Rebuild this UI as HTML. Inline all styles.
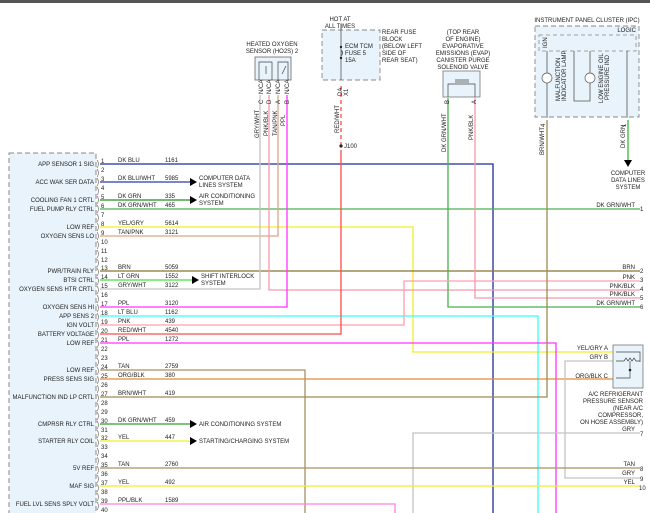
<!DOCTYPE html>
<html><head><meta charset="utf-8"><style>
html,body{margin:0;padding:0;background:#fff;}
svg{display:block;font-family:"Liberation Sans",Arial,sans-serif;}
text{font-size:6px;fill:#222;}
</style></head><body>
<svg width="650" height="513" viewBox="0 0 650 513" xmlns="http://www.w3.org/2000/svg">
<rect x="0" y="0" width="650" height="3" fill="#555"/>
<!-- module -->
<rect x="9" y="153" width="87" height="370" fill="#e8f3fb" stroke="#888" stroke-dasharray="5,3" stroke-width="1"/>
<g fill="none" stroke="#777" stroke-width="0.7">
<path id="c" d="M96,0"/>
</g>
<g stroke="#777" fill="none" stroke-width="0.7">
<path d="M97,160 q3,4 0,8 M97,169 q3,4 0,8 M97,178 q3,4 0,8 M97,187 q3,4 0,8 M97,196 q3,4 0,8 M97,205 q3,4 0,8 M97,214 q3,4 0,8 M97,223 q3,4 0,8 M97,232 q3,4 0,8 M97,241 q3,4 0,8 M97,250 q3,4 0,8 M97,259 q3,4 0,8 M97,268 q3,4 0,8 M97,277 q3,4 0,8 M97,286 q3,4 0,8 M97,295 q3,4 0,8 M97,304 q3,4 0,8 M97,313 q3,4 0,8 M97,322 q3,4 0,8 M97,331 q3,4 0,8 M97,340 q3,4 0,8 M97,349 q3,4 0,8 M97,358 q3,4 0,8 M97,367 q3,4 0,8 M97,376 q3,4 0,8 M97,385 q3,4 0,8 M97,394 q3,4 0,8 M97,403 q3,4 0,8 M97,412 q3,4 0,8 M97,421 q3,4 0,8 M97,430 q3,4 0,8 M97,439 q3,4 0,8 M97,448 q3,4 0,8 M97,457 q3,4 0,8 M97,466 q3,4 0,8 M97,475 q3,4 0,8 M97,484 q3,4 0,8 M97,493 q3,4 0,8 M97,502 q3,4 0,8"/>
</g>
<!-- left labels -->
<g text-anchor="end">
<text x="94" y="166">APP SENSOR 1 SIG</text>
<text x="94" y="184">ACC WAK SER DATA</text>
<text x="94" y="202">COOLING FAN 1 CRTL</text>
<text x="94" y="211">FUEL PUMP RLY CTRL</text>
<text x="94" y="229">LOW REF</text>
<text x="94" y="238">OXYGEN SENS LO</text>
<text x="94" y="273">PWR/TRAIN RLY</text>
<text x="94" y="282">BTSI CTRL</text>
<text x="94" y="291">OXYGEN SENS HTR CRTL</text>
<text x="94" y="309">OXYGEN SENS HI</text>
<text x="94" y="318">APP SENS 2</text>
<text x="94" y="327">IGN VOLT</text>
<text x="94" y="336">BATTERY VOLTAGE</text>
<text x="94" y="345">LOW REF</text>
<text x="94" y="372">LOW REF</text>
<text x="94" y="381">PRESS SENS SIG</text>
<text x="94" y="399">MALFUNCTION IND LP CRTL</text>
<text x="94" y="426">CMPRSR RLY CTRL</text>
<text x="94" y="443">STARTER RLY COIL</text>
<text x="94" y="470">5V REF</text>
<text x="94" y="488">MAF SIG</text>
<text x="94" y="506">FUEL LVL SENS SPLY VOLT</text>
</g>
<!-- pin numbers -->
<g font-size="5.5">
<text x="101" y="163">1</text><text x="101" y="172">2</text><text x="101" y="181">3</text><text x="101" y="190">4</text><text x="101" y="199">5</text><text x="101" y="208">6</text><text x="101" y="217">7</text><text x="101" y="226">8</text><text x="101" y="235">9</text><text x="101" y="244">10</text><text x="101" y="253">11</text><text x="101" y="262">12</text><text x="101" y="270">13</text><text x="101" y="279">14</text><text x="101" y="288">15</text><text x="101" y="297">16</text><text x="101" y="306">17</text><text x="101" y="315">18</text><text x="101" y="324">19</text><text x="101" y="333">20</text><text x="101" y="342">21</text><text x="101" y="351">22</text><text x="101" y="360">23</text><text x="101" y="369">24</text><text x="101" y="378">25</text><text x="101" y="387">26</text><text x="101" y="396">27</text><text x="101" y="405">28</text><text x="101" y="414">29</text><text x="101" y="423">30</text><text x="101" y="432">31</text><text x="101" y="440">32</text><text x="101" y="449">33</text><text x="101" y="458">34</text><text x="101" y="467">35</text><text x="101" y="476">36</text><text x="101" y="485">37</text><text x="101" y="494">38</text><text x="101" y="503">39</text><text x="101" y="512">40</text>
</g>
<!-- wires -->
<g fill="none" stroke-width="1.3">
<path d="M100,164H493V513" stroke="#1c2f96"/>
<path d="M100,182H190" stroke="#2a3fa0"/>
<path d="M100,200H190" stroke="#1f8f1f"/>
<path d="M100,209H640" stroke="#4caf50"/>
<path d="M100,227H413V352H622" stroke="#f2ee2a"/>
<path d="M100,236H278V95" stroke="#dfa585"/>
<path d="M100,271H640" stroke="#8b7332"/>
<path d="M100,280H192" stroke="#40e040"/>
<path d="M100,289H260V95" stroke="#c4c4c4"/>
<path d="M269,95V290H640" stroke="#f29aaa"/>
<path d="M475,98V298H640" stroke="#f29aaa"/>
<path d="M448,98V307H640" stroke="#4caf50"/>
<path d="M100,307H287V95" stroke="#ff33ff"/>
<path d="M100,316H538V513" stroke="#33ffff"/>
<path d="M100,325H404V281H640" stroke="#ff9fb0"/>
<path d="M100,334H341V150" stroke="#ff4a4a"/>
<path d="M341,86V146" stroke="#ff4a4a" stroke-dasharray="4,3"/>
<path d="M341,24V80" stroke="#555" stroke-width="0.8"/>
<path d="M100,343H556V513" stroke="#ff33ff"/>
<path d="M100,370H305V513" stroke="#a89060"/>
<path d="M100,379H622" stroke="#e08a3c"/>
<path d="M100,397H547V120" stroke="#a08a50"/>
<path d="M100,424H190" stroke="#2f9f2f"/>
<path d="M100,441H190" stroke="#f2ee2a"/>
<path d="M413,513V433H640" stroke="#c4c4c4"/>
<path d="M622,361H565V478H640" stroke="#c4c4c4"/>
<path d="M100,468H640" stroke="#a89060"/>
<path d="M100,486H640" stroke="#f2ee2a"/>
<path d="M100,504H395V513" stroke="#ff80e0"/>
<path d="M628,120V162" stroke="#33bb33"/>
</g>
<!-- arrows -->
<g fill="#000">
<path d="M190,178l7,4l-7,4z"/><path d="M190,196l7,4l-7,4z"/><path d="M192,276l7,4l-7,4z"/>
<path d="M190,420l7,4l-7,4z"/><path d="M190,437l7,4l-7,4z"/><path d="M624,160l4,7l4,-7z"/>
</g>
<text x="199" y="180">COMPUTER DATA</text><text x="199" y="187">LINES SYSTEM</text>
<text x="199" y="198">AIR CONDITIONING</text><text x="199" y="205">SYSTEM</text>
<text x="201" y="278">SHIFT INTERLOCK</text><text x="201" y="285">SYSTEM</text>
<text x="199" y="426">AIR CONDITIONING SYSTEM</text>
<text x="199" y="443">STARTING/CHARGING SYSTEM</text>
<!-- wire labels -->
<g>
<text x="118" y="162">DK BLU</text><text x="165" y="162">1161</text>
<text x="118" y="180">DK BLU/WHT</text><text x="165" y="180">5985</text>
<text x="118" y="198">DK GRN</text><text x="165" y="198">335</text>
<text x="118" y="207">DK GRN/WHT</text><text x="165" y="207">465</text>
<text x="118" y="225">YEL/GRY</text><text x="165" y="225">5614</text>
<text x="118" y="234">TAN/PNK</text><text x="165" y="234">3121</text>
<text x="118" y="269">BRN</text><text x="165" y="269">5059</text>
<text x="118" y="278">LT GRN</text><text x="165" y="278">1552</text>
<text x="118" y="287">GRY/WHT</text><text x="165" y="287">3122</text>
<text x="118" y="305">PPL</text><text x="165" y="305">3120</text>
<text x="118" y="314">LT BLU</text><text x="165" y="314">1162</text>
<text x="118" y="323">PNK</text><text x="165" y="323">439</text>
<text x="118" y="332">RED/WHT</text><text x="165" y="332">4540</text>
<text x="118" y="341">PPL</text><text x="165" y="341">1272</text>
<text x="118" y="368">TAN</text><text x="165" y="368">2759</text>
<text x="118" y="377">ORG/BLK</text><text x="165" y="377">380</text>
<text x="118" y="395">BRN/WHT</text><text x="165" y="395">419</text>
<text x="118" y="422">DK GRN/WHT</text><text x="165" y="422">459</text>
<text x="118" y="439">YEL</text><text x="165" y="439">447</text>
<text x="118" y="466">TAN</text><text x="165" y="466">2760</text>
<text x="118" y="484">YEL</text><text x="165" y="484">492</text>
<text x="118" y="502">PPL/BLK</text><text x="165" y="502">1589</text>
</g>
<!-- right labels -->
<g text-anchor="end">
<text x="635" y="207">DK GRN/WHT</text>
<text x="635" y="269">BRN</text><text x="635" y="279">PNK</text><text x="635" y="288">PNK/BLK</text><text x="635" y="296">PNK/BLK</text><text x="635" y="305">DK GRN/WHT</text>
<text x="635" y="431">GRY</text><text x="635" y="466">TAN</text><text x="635" y="475">GRY</text><text x="635" y="484">YEL</text>
<text x="608" y="350">YEL/GRY A</text><text x="608" y="359">GRY B</text><text x="608" y="378">ORG/BLK C</text>
</g>
<g font-size="5.5"><text x="640" y="211">1</text><text x="640" y="273">2</text><text x="640" y="282">3</text><text x="640" y="291">4</text><text x="640" y="300">5</text><text x="640" y="309">6</text><text x="640" y="436">7</text><text x="640" y="471">8</text><text x="640" y="481">9</text><text x="639" y="490">10</text></g>
<!-- A/C sensor -->
<rect x="613" y="345" width="30" height="43" fill="#e8f3fb" stroke="#777" stroke-width="0.8"/>
<path d="M616,352H640V362M616,361h8l2,-3 2,3 2,-3 2,3 2,-3 2,3h4M630,361V378H616" fill="none" stroke="#444" stroke-width="0.7"/>
<circle cx="630" cy="370" r="1.3" fill="#222"/>
<g text-anchor="end"><text x="643" y="396">A/C REFRIGERANT</text><text x="643" y="403">PRESSURE SENSOR</text><text x="643" y="410">(NEAR A/C</text><text x="643" y="417">COMPRESSOR,</text><text x="643" y="424">ON HOSE ASSEMBLY)</text></g>
<!-- HO2S -->
<text x="272" y="46" text-anchor="middle">HEATED OXYGEN</text>
<text x="272" y="53" text-anchor="middle">SENSOR (HO2S) 2</text>
<rect x="255" y="57" width="36" height="23" fill="#e8f3fb" stroke="#666" stroke-width="0.8"/>
<path d="M259,80V62h13v18M278,80V62h10v18M266,66v8M282,74l4,-8" fill="none" stroke="#444" stroke-width="0.7"/>
<g font-size="5" transform="rotate(-90)">
<text x="-94" y="263">N/CA</text><text x="-94" y="271">N/CA</text><text x="-94" y="280">N/CA</text><text x="-94" y="289">N/CA</text>
<text x="-104" y="263">C</text><text x="-104" y="271">D</text><text x="-104" y="280">A</text><text x="-104" y="289">B</text>
<text x="-138" y="259">GRY/WHT</text><text x="-136" y="268">PNK/BLK</text><text x="-136" y="277">TAN/PNK</text><text x="-126" y="285">PPL</text>
</g>
<!-- fuse -->
<text x="340" y="21" text-anchor="middle">HOT AT</text><text x="340" y="28" text-anchor="middle">ALL TIMES</text>
<rect x="322" y="30" width="58" height="50" fill="#e8f3fb" stroke="#888" stroke-dasharray="5,3" stroke-width="0.9"/>
<path d="M341,24V80" stroke="#555" stroke-width="0.8"/>
<path d="M341,50q3,3 0,6" fill="none" stroke="#555"/>
<circle cx="341" cy="47" r="1.2" fill="#222"/><circle cx="341" cy="58" r="1.2" fill="#222"/>
<text x="345" y="48">ECM TCM</text><text x="345" y="55">FUSE 5</text><text x="345" y="62">15A</text>
<text x="382" y="34">REAR FUSE</text><text x="382" y="41">BLOCK</text><text x="382" y="48">(BELOW LEFT</text><text x="382" y="55">SIDE OF</text><text x="382" y="62">REAR SEAT)</text>
<g font-size="5" transform="rotate(-90)"><text x="-96" y="342">DA</text><text x="-96" y="348">X1</text><text x="-133" y="339">RED/WHT</text></g>
<circle cx="341" cy="146" r="1.6" fill="#222"/><text x="344" y="148">J100</text>
<!-- EVAP -->
<g text-anchor="middle"><text x="463" y="34">(TOP REAR</text><text x="463" y="41">OF ENGINE)</text><text x="463" y="48">EVAPORATIVE</text><text x="463" y="55">EMISSIONS (EVAP)</text><text x="463" y="62">CANISTER PURGE</text><text x="463" y="69">SOLENOID VALVE</text></g>
<rect x="443" y="71" width="37" height="26" fill="#e8f3fb" stroke="#777" stroke-width="0.8"/>
<path d="M448,97V84h27v13M455,80h14M455,82h14" fill="none" stroke="#444" stroke-width="0.7"/>
<g font-size="5" transform="rotate(-90)"><text x="-104" y="449">B</text><text x="-104" y="476">A</text><text x="-152" y="446">DK GRN/WHT</text><text x="-140" y="473">PNK/BLK</text></g>
<!-- IPC -->
<text x="587" y="22" text-anchor="middle">INSTRUMENT PANEL CLUSTER (IPC)</text>
<rect x="535" y="26" width="104" height="91" fill="#e8f3fb" stroke="#888" stroke-dasharray="5,3" stroke-width="0.9"/>
<text x="636" y="32" text-anchor="end">LOGIC</text>
<rect x="539" y="35" width="97" height="16" fill="none" stroke="#888" stroke-dasharray="4,3" stroke-width="0.8"/>
<path d="M547,51V118M574,51V101H590V51M627,51V118" fill="none" stroke="#555" stroke-width="0.8"/>
<circle cx="547" cy="78" r="5" fill="#fff" stroke="#555" stroke-width="0.7"/>
<circle cx="590" cy="78" r="5" fill="#fff" stroke="#555" stroke-width="0.7"/>
<g font-size="5" transform="rotate(-90)"><text x="-48" y="547">IGN</text>
<text x="-101" y="560">MALFUNCTION</text><text x="-101" y="566">INDICATOR LAMP</text>
<text x="-103" y="603">LOW ENGINE OIL</text><text x="-100" y="609">PRESSURE IND</text>
<text x="-127" y="545">4</text><text x="-127" y="626">1</text>
<text x="-155" y="544">BRN/WHT</text><text x="-148" y="625">DK GRN</text></g>
<g text-anchor="middle"><text x="628" y="175">COMPUTER</text><text x="628" y="182">DATA LINES</text><text x="628" y="189">SYSTEM</text></g>
</svg>
</body></html>
